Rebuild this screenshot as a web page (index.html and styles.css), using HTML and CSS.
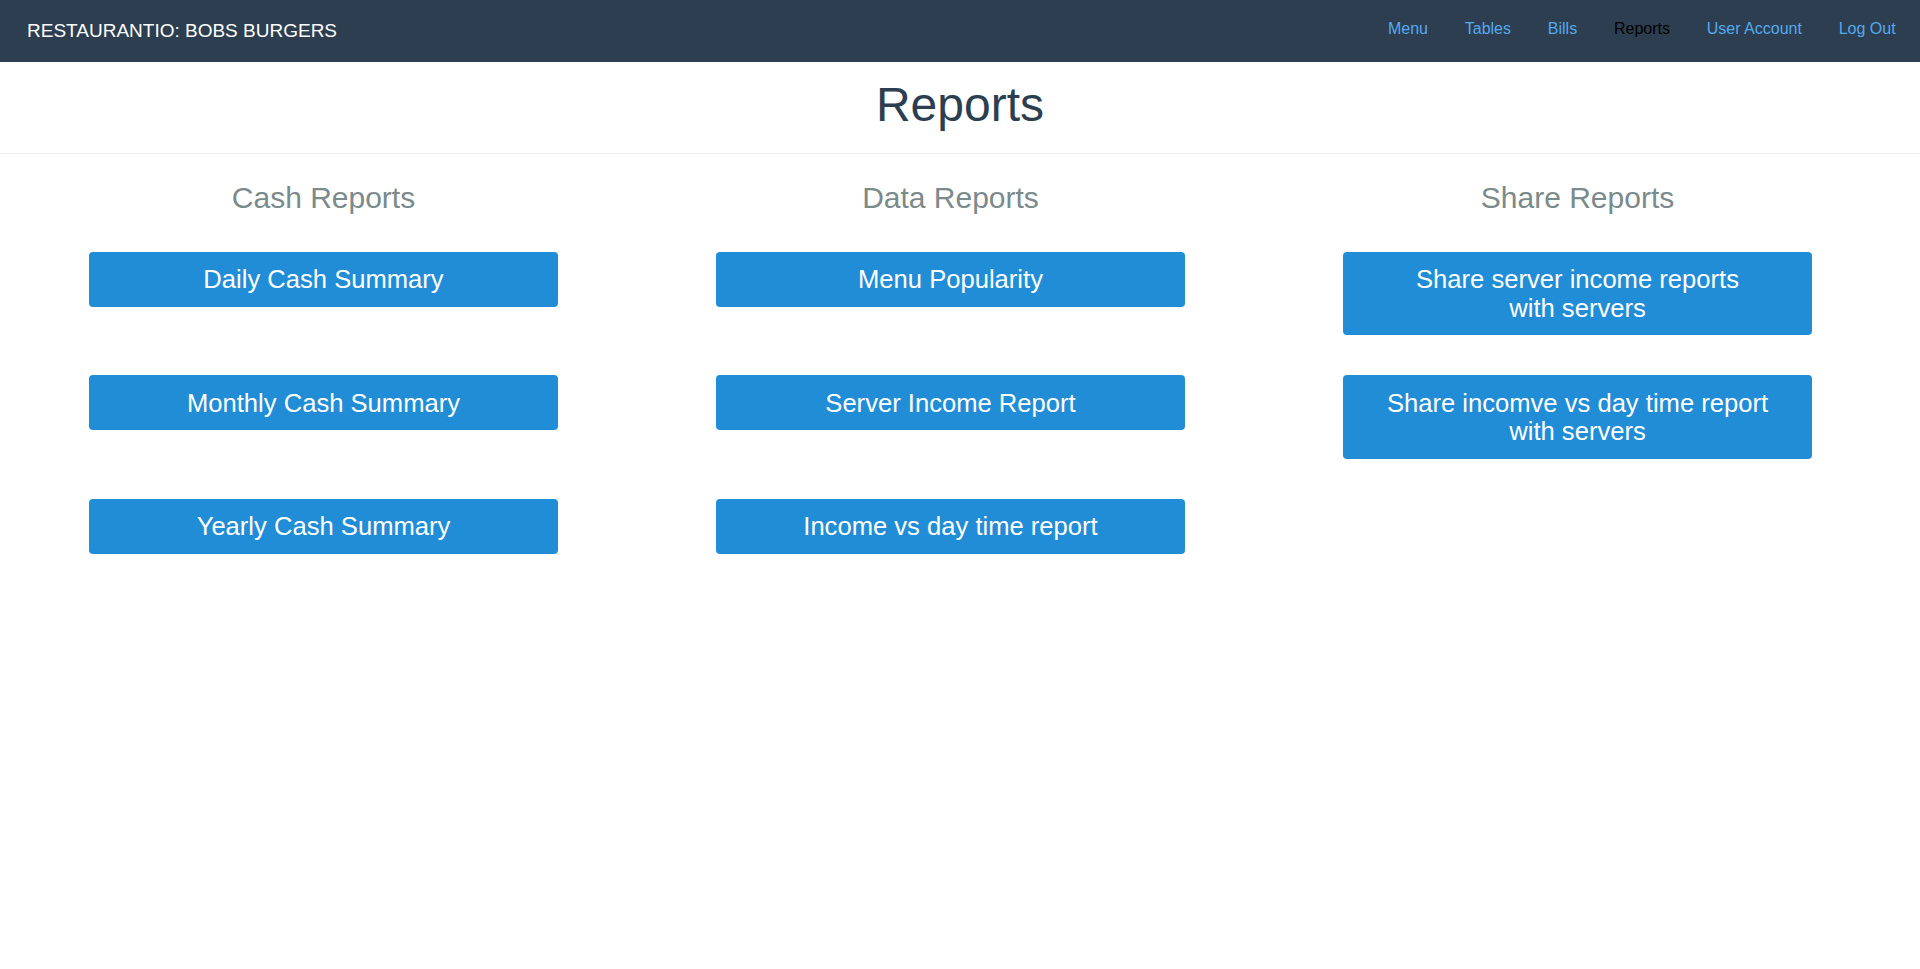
FILE: index.html
```html
<!DOCTYPE html>
<html lang="en">
<head>
<meta charset="utf-8">
<title>Restaurantio: Reports</title>
<link rel="stylesheet" href="styles.css">
</head>
<body>
<nav class="navbar">
  <a class="brand" href="#">RESTAURANTIO: BOBS BURGERS</a>
  <ul class="nav-links">
    <li><a href="#">Menu</a></li>
    <li><a href="#">Tables</a></li>
    <li><a href="#">Bills</a></li>
    <li><a href="#" class="active">Reports</a></li>
    <li><a href="#">User Account</a></li>
    <li><a href="#">Log Out</a></li>
  </ul>
</nav>
<header class="page-header">
  <h1>Reports</h1>
</header>
<main class="reports">
  <section class="report-col">
    <h3>Cash Reports</h3>
    <div class="btn-list">
      <div class="cell"><button class="btn">Daily Cash Summary</button></div>
      <div class="cell"><button class="btn">Monthly Cash Summary</button></div>
      <div class="cell"><button class="btn">Yearly Cash Summary</button></div>
    </div>
  </section>
  <section class="report-col">
    <h3>Data Reports</h3>
    <div class="btn-list">
      <div class="cell"><button class="btn">Menu Popularity</button></div>
      <div class="cell"><button class="btn">Server Income Report</button></div>
      <div class="cell"><button class="btn">Income vs day time report</button></div>
    </div>
  </section>
  <section class="report-col">
    <h3>Share Reports</h3>
    <div class="btn-list">
      <div class="cell"><button class="btn">Share server income reports<br>with servers</button></div>
      <div class="cell"><button class="btn">Share incomve vs day time report<br>with servers</button></div>
    </div>
  </section>
</main>
</body>
</html>
```

FILE: styles.css
```css
* { box-sizing: border-box; }

html, body {
  margin: 0;
  padding: 0;
  background: #ffffff;
  font-family: "Liberation Sans", Arial, Helvetica, sans-serif;
}

.navbar {
  height: 62px;
  background: #2c3e50;
  display: flex;
  justify-content: space-between;
  align-items: flex-start;
  padding: 0 6px 0 27px;
}

.brand {
  color: #ffffff;
  text-decoration: none;
  font-size: 19px;
  line-height: 62px;
}

.nav-links {
  list-style: none;
  margin: 0;
  padding: 0;
  display: flex;
}

.nav-links a {
  display: block;
  padding: 0 18.4px;
  font-size: 16px;
  line-height: 58px;
  color: #55aaee;
  text-decoration: none;
}

.nav-links a.active {
  color: #000000;
}

.page-header {
  padding: 17px 0 21px;
  border-bottom: 1px solid #eeeeee;
  text-align: center;
}

.page-header h1 {
  margin: 0;
  font-size: 48px;
  line-height: 1.1;
  font-weight: 400;
  color: #2c3e50;
}

.reports {
  display: grid;
  grid-template-columns: repeat(3, 627px);
  padding: 0 10px;
}

.report-col {
  text-align: center;
}

.report-col h3 {
  margin: 27px 0 38px;
  font-size: 30px;
  line-height: 33px;
  font-weight: 400;
  color: #7b8a8b;
}

.btn-list {
  display: grid;
  grid-auto-rows: 123.5px;
  align-items: start;
}

.btn {
  width: 469px;
  margin: 0 auto;
  display: block;
  border: 0;
  border-radius: 4px;
  background: #218dd6;
  color: #ffffff;
  font-family: "Liberation Sans", Arial, Helvetica, sans-serif;
  font-size: 25.6px;
  line-height: 28.4px;
  padding: 13.3px 10px;
  cursor: pointer;
}
```
